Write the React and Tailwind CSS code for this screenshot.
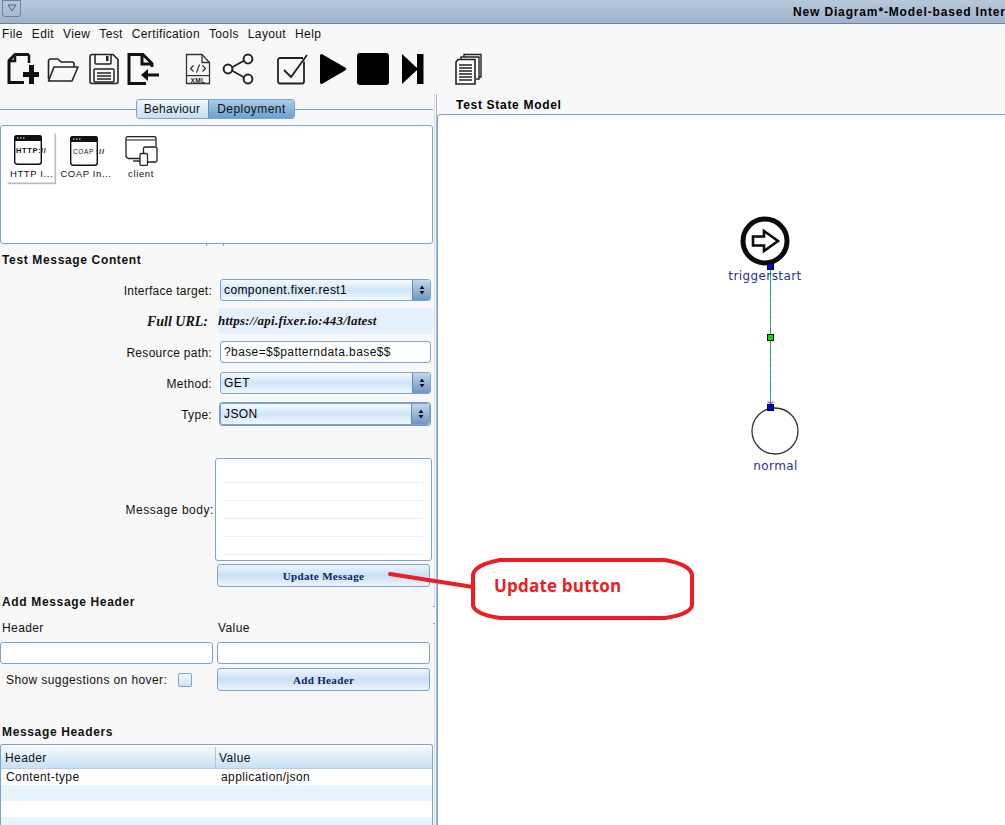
const SANS = "font-['Liberation_Sans',Arial,sans-serif]";

function Sel({ value, focus, className = "" }) {
  return (
    <div className={`flex h-[22px] rounded-[3px] border border-[#7ba3d6] bg-gradient-to-b from-[#f6fbff] via-[#cfe5f8] to-[#f2f8fd] overflow-hidden ${focus ? "shadow-[0_0_0_1px_#6f9bd0]" : ""} ${className}`}>
      <div className="flex-1 pl-[3px] leading-[21px] text-black">{value}</div>
      <div className="w-[18px] border-l border-[#5f8dbd] bg-gradient-to-b from-[#c4d7ea] to-[#6b97c4] flex flex-col items-center justify-center gap-[2px]">
        <svg width="6" height="10" viewBox="0 0 6 10"><path d="M3 0.5 5.5 4H.5z M3 9.5.5 6h5z" fill="#111" /></svg>
      </div>
    </div>
  );
}

function Input({ value = "", className = "" }) {
  return <div className={`h-[22px] rounded-[3px] border border-[#7ba3d6] bg-white pl-[3px] leading-[21px] ${className}`}>{value}</div>;
}

function Btn({ children, className = "" }) {
  return (
    <div className={`h-[23px] rounded-[3px] border border-[#7ba3d6] bg-gradient-to-b from-[#eef5fc] via-[#c9e0f4] to-[#edf5fb] text-center leading-[22px] font-['Liberation_Serif',serif] font-bold text-[11px] tracking-[0.35px] text-[#0b1f6b] ${className}`}>
      {children}
    </div>
  );
}

function Row({ label, children, className = "", track = "tracking-[0.3px]" }) {
  return (
    <div className={`flex items-center ${className}`}>
      <div className={`w-[212px] text-right shrink-0 pt-[1px] ${track}`}>{label}</div>
      {children}
    </div>
  );
}

const I = ({ children, vb = "0 0 32 32", cls = "" }) => (
  <svg width="32" height="32" viewBox={vb} className={`shrink-0 ${cls}`}>{children}</svg>
);

function Toolbar() {
  return (
    <div className="h-[50px] flex items-center shrink-0">
      <I cls="ml-[7px]">
        <path d="M18 1.5H8L2 7.5V29.5H17" fill="none" stroke="#111" strokeWidth="3" />
        <path d="M22 1.5V10M8 1.5V8H2" fill="none" stroke="#111" strokeWidth="2.5" />
        <path d="M18 1.5h4" stroke="#111" strokeWidth="3" />
        <path d="M22 12h5v7h5v5h-5v7h-5v-7h-6v-5h6z" fill="#111" />
      </I>
      <I cls="ml-[8px]">
        <path d="M1.5 26V8a2 2 0 0 1 2-2H11l3 3h11a2 2 0 0 1 2 2v3" fill="none" stroke="#222" strokeWidth="1.6" />
        <path d="M1.5 28 7 14h24l-6 14z" fill="none" stroke="#222" strokeWidth="1.6" strokeLinejoin="round" />
      </I>
      <I cls="ml-[9px]">
        <path d="M2 3.5a2 2 0 0 1 2-2h21l5 5v22a2 2 0 0 1-2 2H4a2 2 0 0 1-2-2z" fill="none" stroke="#222" strokeWidth="1.6" />
        <path d="M7 2v8a1 1 0 0 0 1 1h14a1 1 0 0 0 1-1V2" fill="none" stroke="#222" strokeWidth="1.5" />
        <rect x="18" y="3" width="2.5" height="5" fill="#222" />
        <rect x="6" y="16" width="20" height="13" rx="1" fill="none" stroke="#222" strokeWidth="1.5" />
        <path d="M9 20h14M9 23h14M9 26h14" stroke="#222" strokeWidth="1.5" />
      </I>
      <I cls="ml-[7px]">
        <path d="M19 30.5H2V1.5h14l9 9V14" fill="none" stroke="#111" strokeWidth="3" />
        <path d="M15 2v9h10" fill="none" stroke="#111" strokeWidth="3" />
        <path d="M32 22H20" stroke="#111" strokeWidth="3" />
        <path d="M14 22l7-6v12z" fill="#111" />
      </I>
      <I cls="ml-[23px]">
        <path d="M4.5 1.5H20l7.5 8V30.5H4.5z" fill="none" stroke="#333" strokeWidth="1.3" />
        <path d="M20 1.5V9.5H27.5" fill="none" stroke="#333" strokeWidth="1.3" />
        <path d="M11.5 12.5 8.5 15.5l3 3M20.5 12.5l3 3-3 3M17.5 11.5 14.5 19.5" fill="none" stroke="#222" strokeWidth="1.1" />
        <rect x="4.5" y="22" width="23" height="1.2" fill="#333" />
        <text x="16" y="29.5" textAnchor="middle" fontSize="6.5" fontFamily="Liberation Sans" fontWeight="700" fill="#222">XML</text>
      </I>
      <I cls="ml-[8px]">
        <path d="M7 16 25 6M7 16 25 26" stroke="#222" strokeWidth="1.8" />
        <circle cx="6" cy="16" r="4.4" fill="#fff" stroke="#222" strokeWidth="2" />
        <circle cx="26" cy="6" r="4.4" fill="#fff" stroke="#222" strokeWidth="2" />
        <circle cx="26" cy="26" r="4.4" fill="#fff" stroke="#222" strokeWidth="2" />
      </I>
      <I cls="ml-[23px]">
        <path d="M27 8.5v20a2 2 0 0 1-2 2H3a2 2 0 0 1-2-2V7a2 2 0 0 1 2-2h23" fill="none" stroke="#222" strokeWidth="1.8" />
        <path d="M7 17l7 7L30 2" fill="none" stroke="#222" strokeWidth="1.8" />
      </I>
      <I cls="ml-[8px]"><path d="M3 2.5a1.5 1.5 0 0 1 2.3-1.2L28.5 14.8a1.5 1.5 0 0 1 0 2.4L5.3 30.7A1.5 1.5 0 0 1 3 29.5z" fill="#000" /></I>
      <I cls="ml-[8px]"><rect x="0" y="0" width="32" height="32" rx="3" fill="#000" /></I>
      <I cls="ml-[8px]"><path d="M5 1l15 14V1h6.5v30H20V17L5 31z" fill="#000" /></I>
      <I cls="ml-[25px]">
        <path d="M10 5V1.5h17V24h-2" fill="none" stroke="#222" strokeWidth="1.4" />
        <path d="M7 7.5V4h18v22h-3" fill="#fff" stroke="#222" strokeWidth="1.4" />
        <path d="M9 6.5h-5l-2 2.5V31h19V6.5z" fill="#fff" stroke="#222" strokeWidth="1.6" />
        <path d="M5 12h13M5 15h13M5 18h13M5 21h13M5 24h13M5 27h13" stroke="#222" strokeWidth="1.5" />
      </I>
    </div>
  );
}

function Browser({ coap }) {
  return (
    <svg width="28" height="30" viewBox="0 0 28 30" className="overflow-visible">
      <rect x="0.7" y="0.7" width="26.6" height="28.6" rx="2.5" fill="#fff" stroke="#111" strokeWidth="1.4" />
      <path d="M0 3a3 3 0 0 1 3-3h22a3 3 0 0 1 3 3v3H0z" fill="#111" />
      <path d="M3 3h1.5M6 3h1.5M9 3h1.5" stroke="#fff" strokeWidth="1" />
      {coap ? (
        <text x="3" y="18" fontFamily="Liberation Sans" fontSize="6.5" fill="#111">COAP<tspan dx="2" fontSize="8" fontWeight="700">://</tspan></text>
      ) : (
        <text x="2" y="18" fontFamily="Liberation Sans" fontWeight="700" fontSize="7.5" fill="#111">HTTP://</text>
      )}
    </svg>
  );
}

function Palette() {
  return (
    <div className="h-[119px] w-[433px] rounded-[3px] border border-[#7ba3d6] bg-white flex text-[9.5px] tracking-[0.6px] whitespace-nowrap shrink-0">
      <div className="ml-[6px] mt-[7px] w-[48px] h-[50px] bg-white shadow-[1px_1px_1px_#bbb] border-r border-b border-[#ddd] flex flex-col items-start">
        <div className="mt-[2px] ml-[7px] h-[30px]"><Browser /></div>
        <div className="mt-[3px] ml-[3px] leading-[12px]">HTTP I...</div>
      </div>
      <div className="ml-[5px] mt-[7px] w-[52px] flex flex-col items-center">
        <div className="mt-[3px] mr-[5px] h-[30px]"><Browser coap /></div>
        <div className="mt-[2px] leading-[12px]">COAP In...</div>
      </div>
      <div className="ml-[6px] mt-[7px] w-[46px] flex flex-col items-center">
        <svg width="33" height="30" viewBox="0 0 33 30" className="mt-[3px]">
          <path d="M3 22.5h14M1 2.5a2 2 0 0 1 2-2h26a2 2 0 0 1 2 2V10M1 2.5V20a2 2 0 0 0 2 2" fill="none" stroke="#222" strokeWidth="1.3" />
          <path d="M1 4h30" stroke="#555" strokeWidth="1.4" />
          <path d="M8 25h8" stroke="#222" strokeWidth="1.4" />
          <rect x="18.5" y="11" width="13.5" height="15" rx="1.5" fill="#fff" stroke="#222" strokeWidth="1.3" />
          <rect x="15" y="17.5" width="7.5" height="12" rx="1.2" fill="#fff" stroke="#222" strokeWidth="1.3" />
        </svg>
        <div className="mt-[2px] leading-[12px]">client</div>
      </div>
    </div>
  );
}

function LeftPanel() {
  return (
    <div className="w-[434px] shrink-0 flex flex-col relative">
      <div className="relative h-[31px] shrink-0 flex justify-center items-start pt-[5px]">
        <div className="absolute left-0 right-[1px] top-[15px] h-[1px] bg-[#7d9fc6]" />
        <div className="relative flex ml-[-3px] h-[20px] rounded-[3px] border border-[#7ba3d6] overflow-hidden">
          <div className="w-[71px] pr-[1px] text-center leading-[19px] tracking-[0.3px] bg-gradient-to-b from-[#eef6fd] to-[#c6def3]">Behaviour</div>
          <div className="w-[86px] text-center leading-[19px] tracking-[0.45px] bg-gradient-to-b from-[#a9cce9] to-[#6c9fd1] border-l border-[#5f8dbd]">Deployment</div>
        </div>
      </div>
      <Palette />
      <div className="mt-[8px] pl-[2px] font-bold leading-[16px] tracking-[0.65px]">Test Message Content</div>
      <Row label="Interface target:" track="tracking-[0.25px]" className="mt-[11px]"><Sel value="component.fixer.rest1" className="ml-[8px] w-[211px]" /></Row>
      <div className="mt-[7px] flex items-center h-[26px]">
        <div className="w-[208px] text-right font-['Liberation_Serif',serif] font-bold italic text-[14px] tracking-normal">Full URL:</div>
        <div className="ml-[10px] w-[215px] h-full bg-[#e4f0fb] font-['Liberation_Serif',serif] font-bold italic text-[13px] tracking-[0.25px] leading-[26px]">https://api.fixer.io:443/latest</div>
      </div>
      <Row label="Resource path:" className="mt-[7px]"><Input value="?base=$$patterndata.base$$" className="ml-[8px] w-[211px]" /></Row>
      <Row label="Method:" className="mt-[9px]"><Sel value="GET" className="ml-[8px] w-[211px]" /></Row>
      <Row label="Type:" className="mt-[9px]"><Sel value="JSON" focus className="ml-[8px] w-[210px]" /></Row>
      <div className="mt-[33px] flex items-center h-[103px]">
        <div className="w-[214px] text-right tracking-[0.55px] pt-[1px]">Message body:</div>
        <div className="ml-[1px] w-[217px] h-full rounded-[3px] border border-[#7ba3d6] bg-white px-[8px] pt-[23px] flex flex-col gap-[17px]">
          <div className="h-[1px] bg-[#e3f1fb]" />
          <div className="h-[1px] bg-[#e3f1fb]" />
          <div className="h-[1px] bg-[#e3f1fb]" />
          <div className="h-[1px] bg-[#e3f1fb]" />
          <div className="h-[1px] bg-[#e3f1fb]" />
        </div>
      </div>
      <Btn className="mt-[3px] ml-[217px] w-[213px]">Update Message</Btn>
      <div className="mt-[7px] pl-[2px] font-bold leading-[16px] tracking-[0.65px]">Add Message Header</div>
      <div className="mt-[10px] flex leading-[16px]">
        <div className="w-[217px] pl-[2px]">Header</div>
        <div className="pl-[1px]">Value</div>
      </div>
      <div className="mt-[6px] flex gap-[4px]">
        <Input className="w-[213px]" />
        <Input className="w-[213px]" />
      </div>
      <div className="mt-[4px] flex items-center">
        <div className="w-[178px] pl-[6px] whitespace-nowrap">Show suggestions on hover:</div>
        <div className="w-[14px] h-[14px] rounded-[2px] border border-[#7ba3d6] bg-gradient-to-b from-[#f4f9fd] to-[#cfe3f5]" />
        <Btn className="ml-[25px] w-[213px]">Add Header</Btn>
      </div>
      <div className="mt-[33px] pl-[2px] font-bold leading-[16px] tracking-[0.65px]">Message Headers</div>
      <div className="mt-[4px] w-[433px] flex-1 rounded-t-[3px] border border-b-0 border-[#7ba3d6] bg-white pt-[2px] overflow-hidden">
        <div className="flex h-[22px] bg-gradient-to-b from-[#f2f8fd] to-[#c9e0f4] border-b border-[#b7cfe6] leading-[23px]">
          <div className="w-[215px] pl-[4px] border-r border-[#a9c4de]">Header</div>
          <div className="pl-[3px]">Value</div>
        </div>
        <div className="flex h-[16px] leading-[16px]">
          <div className="w-[215px] pl-[5px]">Content-type</div>
          <div className="pl-[5px]">application/json</div>
        </div>
        <div className="h-[16px] bg-[#e8f3fb]" />
        <div className="h-[16px] bg-white" />
        <div className="h-[16px] bg-[#e8f3fb]" />
      </div>
      <div className="absolute left-[206px] top-[149px] w-[18px] h-[3px] border-x border-[#7ba3d6]" />
      <div className="absolute left-[433px] top-[512px] w-[2px] h-[18px] bg-[#f4f9fd] border-y border-[#7ba3d6]" />
    </div>
  );
}

function Diagram() {
  return (
    <svg width="566" height="710" viewBox="438 115 566 710" className="absolute left-0 top-0">
      <circle cx="765" cy="241" r="22" fill="#fff" stroke="#0a0a0a" strokeWidth="5" />
      <path d="M753 236.5h11V231l14 10-14 10v-5.5h-11z" fill="#fff" stroke="#0a0a0a" strokeWidth="2.6" strokeLinejoin="miter" />
      <line x1="770.5" y1="268" x2="770.5" y2="404" stroke="#00e000" strokeWidth="1" />
      <line x1="770.5" y1="268" x2="770.5" y2="404" stroke="#5a62e0" strokeWidth="1" strokeDasharray="3 3" />
      <path d="M767.5 401.5 770.5 404l3-2.5" fill="none" stroke="#6a72e0" strokeWidth="1.2" />
      <circle cx="775" cy="431" r="23" fill="#fff" stroke="#333" strokeWidth="1.3" />
      <rect x="767.5" y="263.5" width="6" height="6" fill="#0000e6" stroke="#000" />
      <rect x="767.5" y="334.5" width="6" height="6" fill="#00e600" stroke="#000" />
      <rect x="767.5" y="404.5" width="6" height="6" fill="#0000e6" stroke="#000" />
      <text x="765" y="280" textAnchor="middle" fontFamily="DejaVu Sans" fontSize="12" fill="#2a2f9a">triggerstart</text>
      <text x="775.5" y="470" textAnchor="middle" fontFamily="DejaVu Sans" fontSize="12" fill="#2a2f9a">normal</text>
    </svg>
  );
}

export default function App() {
  return (
    <div className={`relative w-[1005px] h-[825px] overflow-hidden bg-[#f8f8f8] text-[12px] tracking-[0.4px] text-[#111] flex flex-col ${SANS}`}>
      <div className="h-[24px] shrink-0 flex items-center justify-between bg-gradient-to-b from-[#b8c8da] to-[#9fb3cb] border-b border-[#5f84a6]">
        <div className="ml-[2px] mt-[-7px] w-[19px] h-[17px] rounded-b-[3px] border border-[#6f7f90] flex items-center justify-center">
          <svg width="10" height="8" viewBox="0 0 10 8"><path d="M1 1h8L5 7z" fill="none" stroke="#55626f" /></svg>
        </div>
        <div className="font-bold whitespace-nowrap w-[212px] text-black tracking-[0.85px]">New Diagram*-Model-based Interoperability</div>
      </div>
      <div className="h-[20px] shrink-0 flex items-center pl-[2px] gap-[9px] leading-[18px] tracking-[0.37px]">
        {["File", "Edit", "View", "Test", "Certification", "Tools", "Layout", "Help"].map((m) => <span key={m}>{m}</span>)}
      </div>
      <Toolbar />
      <div className="flex-1 flex min-h-0">
        <LeftPanel />
        <div className="w-[3px] shrink-0 border-l border-[#dcdcdc] border-r-[1px] border-r-[#9db8d8]" />
        <div className="flex-1 flex flex-col min-w-0">
          <div className="h-[20px] pl-[19px] pt-[3px] font-bold leading-[16px] shrink-0 text-black tracking-[0.7px]">Test State Model</div>
          <div className="relative flex-1 bg-white rounded-tl-[4px] border-t border-l border-[#7ba3d6] overflow-hidden"><Diagram /></div>
        </div>
      </div>
      <svg width="320" height="80" viewBox="380 550 320 80" className="absolute left-[380px] top-[550px]">
        <path d="M390 574 473 587" stroke="#ee1c25" strokeWidth="4" strokeLinecap="round" />
        <path d="M473 575q1-10 27-15h165q26 5 27 15v30q-1 9-27 13H500q-26-4-27-13z" fill="#fff" stroke="#ee1c25" strokeWidth="4" />
      </svg>
      <div className="absolute left-[494px] top-[574px] font-['Open_Sans',sans-serif] font-bold text-[17px] tracking-[0.2px] leading-[24px] text-[#ee1c25] whitespace-nowrap">Update button</div>
    </div>
  );
}
